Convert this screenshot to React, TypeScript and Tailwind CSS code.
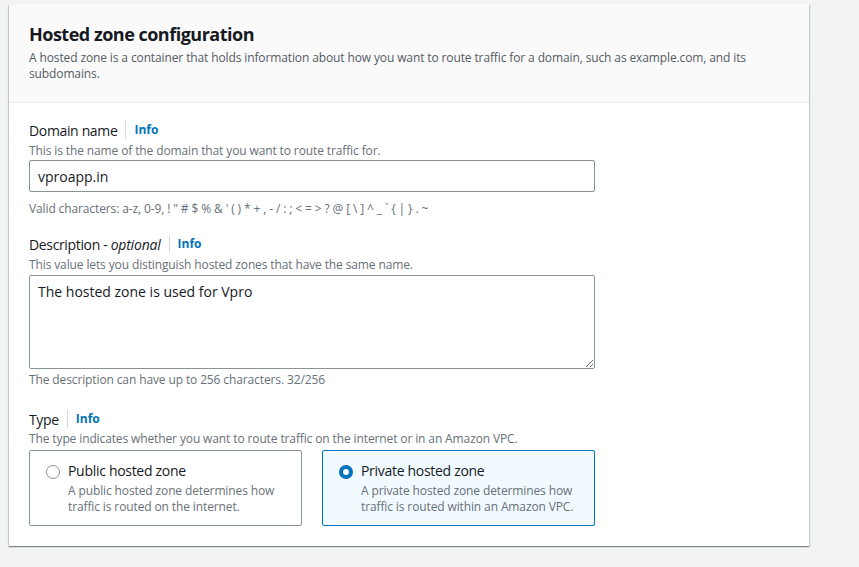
import React, { useState } from "react";

const font = { fontFamily: '"Open Sans", "Noto Sans", Arial, sans-serif' };

const Label: React.FC<{ children: React.ReactNode }> = ({ children }) => (
  <div className="flex items-center h-[22px] text-[14px] tracking-[-0.35px] text-[#16191f]">
    <span>{children}</span>
    <span className="mx-[8px] h-[18px] border-l border-[#d5dbdb]" />
    <a className="text-[12px] font-bold tracking-normal text-[#0073bb] cursor-pointer">Info</a>
  </div>
);

const Hint: React.FC<{ children: React.ReactNode; className?: string }> = ({ children, className = "" }) => (
  <p className={`text-[12px] leading-[16px] tracking-[-0.12px] text-[#687078] ${className}`}>{children}</p>
);

const zones = [
  { id: "public", title: "Public hosted zone", desc: "A public hosted zone determines how traffic is routed on the internet." },
  { id: "private", title: "Private hosted zone", desc: "A private hosted zone determines how traffic is routed within an Amazon VPC." },
];

export default function App() {
  const [type, setType] = useState("private");
  const [domain, setDomain] = useState("vproapp.in");
  const [desc, setDesc] = useState("The hosted zone is used for Vpro");

  return (
    <div className="min-h-[567px] bg-[#f2f3f3] pt-[4px] pl-[9px]" style={font}>
      <div className="w-[800px] bg-white shadow-[0_1px_1px_0_rgba(0,28,36,0.3),1px_1px_1px_0_rgba(0,28,36,0.15),-1px_1px_1px_0_rgba(0,28,36,0.15)]">
        {/* header */}
        <div className="bg-[#fafafa] border-b border-[#eaeded] px-[20px] pt-[19px] pb-[20px]">
          <h2 className="text-[18px] leading-[22px] font-bold tracking-[-0.5px] text-[#16191f]">Hosted zone configuration</h2>
          <p className="mt-[5px] text-[12px] leading-[16px] tracking-[-0.12px] text-[#545b64] pr-[40px]">
            A hosted zone is a container that holds information about how you want to route traffic for a domain, such as example.com, and its subdomains.
          </p>
        </div>

        {/* body */}
        <div className="px-[20px] pt-[16px] pb-[20px]">
          <Label>Domain name</Label>
          <Hint className="mt-[2px]">This is the name of the domain that you want to route traffic for.</Hint>
          <input
            value={domain}
            onChange={(e) => setDomain(e.target.value)}
            className="mt-[1px] block w-[566px] h-[32px] px-[8px] text-[14px] text-[#16191f] border border-[#879596] rounded-[2px] outline-none"
          />
          <Hint className="mt-[9px]">Valid characters: a-z, 0-9, ! " # $ % &amp; ' ( ) * + , - / : ; &lt; = &gt; ? @ [ \ ] ^ _ ` {"{"} | {"}"} . ~</Hint>

          <div className="mt-[16px]">
            <Label>
              Description - <i className="tracking-[-0.2px]">optional</i>
            </Label>
          </div>
          <Hint className="mt-[2px]">This value lets you distinguish hosted zones that have the same name.</Hint>
          <textarea
            value={desc}
            onChange={(e) => setDesc(e.target.value)}
            className="mt-[2px] block w-[566px] h-[94px] px-[8px] py-[6px] text-[14px] leading-[20px] text-[#16191f] border border-[#879596] rounded-[2px] outline-none"
          />
          <Hint className="mt-[3px]">The description can have up to 256 characters. {desc.length}/256</Hint>

          <div className="mt-[20px]">
            <Label>Type</Label>
          </div>
          <Hint className="mt-[1px]">The type indicates whether you want to route traffic on the internet or in an Amazon VPC.</Hint>
          <div className="mt-[3px] flex gap-[20px]">
            {zones.map((z) => {
              const on = type === z.id;
              return (
                <label
                  key={z.id}
                  onClick={() => setType(z.id)}
                  className={`w-[273px] h-[76px] flex gap-[8px] pl-[16px] pr-[12px] pt-[10px] rounded-[2px] border cursor-pointer ${
                    on ? "bg-[#f1faff] border-[#0073bb]" : "bg-white border-[#879596]"
                  }`}
                >
                  <span
                    className={`mt-[4px] w-[14px] h-[14px] rounded-full flex items-center justify-center shrink-0 ${
                      on ? "bg-[#0073bb]" : "border border-[#879596] bg-white"
                    }`}
                  >
                    {on && <span className="w-[6px] h-[6px] rounded-full bg-white" />}
                  </span>
                  <span>
                    <span className="block text-[14px] leading-[20px] tracking-[-0.3px] text-[#16191f]">{z.title}</span>
                    <span className="block mt-[2px] text-[12px] leading-[16px] tracking-[-0.12px] text-[#687078]">{z.desc}</span>
                  </span>
                </label>
              );
            })}
          </div>
        </div>
      </div>
    </div>
  );
}
